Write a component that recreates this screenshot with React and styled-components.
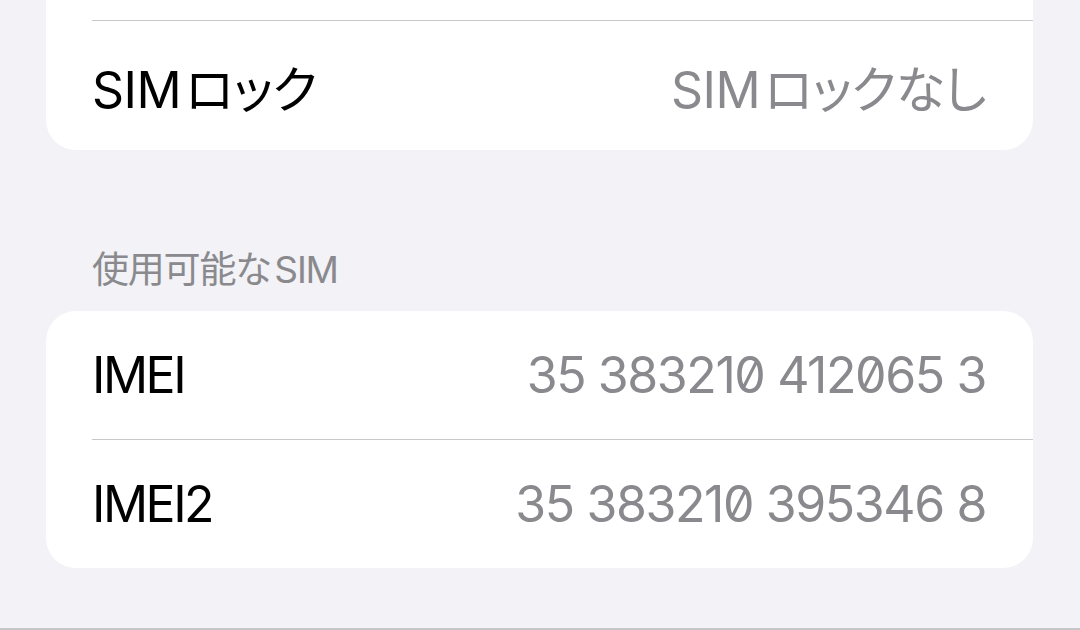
import React from 'react'
import styled, {createGlobalStyle} from 'styled-components'

const GlobalStyle = createGlobalStyle`
  html, body {
    margin: 0;
    padding: 0;
    background: #f2f2f7;
  }
  body {
    font-family: Inter, "Noto Sans CJK JP", sans-serif;
    -webkit-font-smoothing: antialiased;
  }
`

const Screen = styled.div`
  height: 630px;
  display: flex;
  flex-direction: column;
  overflow: hidden;
`

const List = styled.main`
  flex: 1;
  padding: 0 47px 0 46px;
`

const Card = styled.section`
  background: #fff;
  border-radius: ${p => p.$openTop ? '0 0 30px 30px' : '30px'};
  overflow: hidden;
`

const Row = styled.div`
  height: ${p => p.$height || 128}px;
  display: flex;
  align-items: center;
  justify-content: space-between;
  padding: 0 47px 0 46px;
  font-size: 50px;
  letter-spacing: -0.5px;
  font-feature-settings: "palt";
`

const Separator = styled.div`
  height: 1px;
  margin-left: 46px;
  background: #c8c8cc;
`

const Label = styled.span`
  color: #000;
  letter-spacing: ${p => p.$tight ? '-2.5px' : '-0.5px'};
`

const Value = styled.span`
  color: #8a8a8e;
  font-feature-settings: ${p => p.$digits ? '"zero"' : '"palt"'};
  letter-spacing: ${p => p.$digits ? '-1.4px' : '-0.5px'};
`

// small gap between latin and kana runs
const Kana = styled.span`
  margin-left: 4px;
`

const SectionHeader = styled.h2`
  margin: 0;
  padding: 96px 46px 17px;
  font-size: 37px;
  line-height: 48px;
  font-weight: 400;
  color: #8a8a8e;
  letter-spacing: -1.2px;
  font-feature-settings: "palt";
`

const BottomBar = styled.footer`
  height: 2px;
  background: #c6c6c8;
`

const devices = [
  {label: 'IMEI', value: '35 383210 412065 3'},
  {label: 'IMEI2', value: '35 383210 395346 8'},
]

export default function App() {
  return (
    <Screen>
      <GlobalStyle />
      <List>
        <Card $openTop>
          <Row $height={20} />
          <Separator />
          <Row $height={129}>
            <Label>SIM<Kana>ロック</Kana></Label>
            <Value>SIM<Kana>ロックなし</Kana></Value>
          </Row>
        </Card>

        <SectionHeader>使用可能な<Kana>SIM</Kana></SectionHeader>
        <Card>
          {devices.map((d, i) => (
            <React.Fragment key={d.label}>
              {i > 0 && <Separator />}
              <Row>
                <Label $tight>{d.label}</Label>
                <Value $digits>{d.value}</Value>
              </Row>
            </React.Fragment>
          ))}
        </Card>
      </List>
      <BottomBar />
    </Screen>
  )
}
